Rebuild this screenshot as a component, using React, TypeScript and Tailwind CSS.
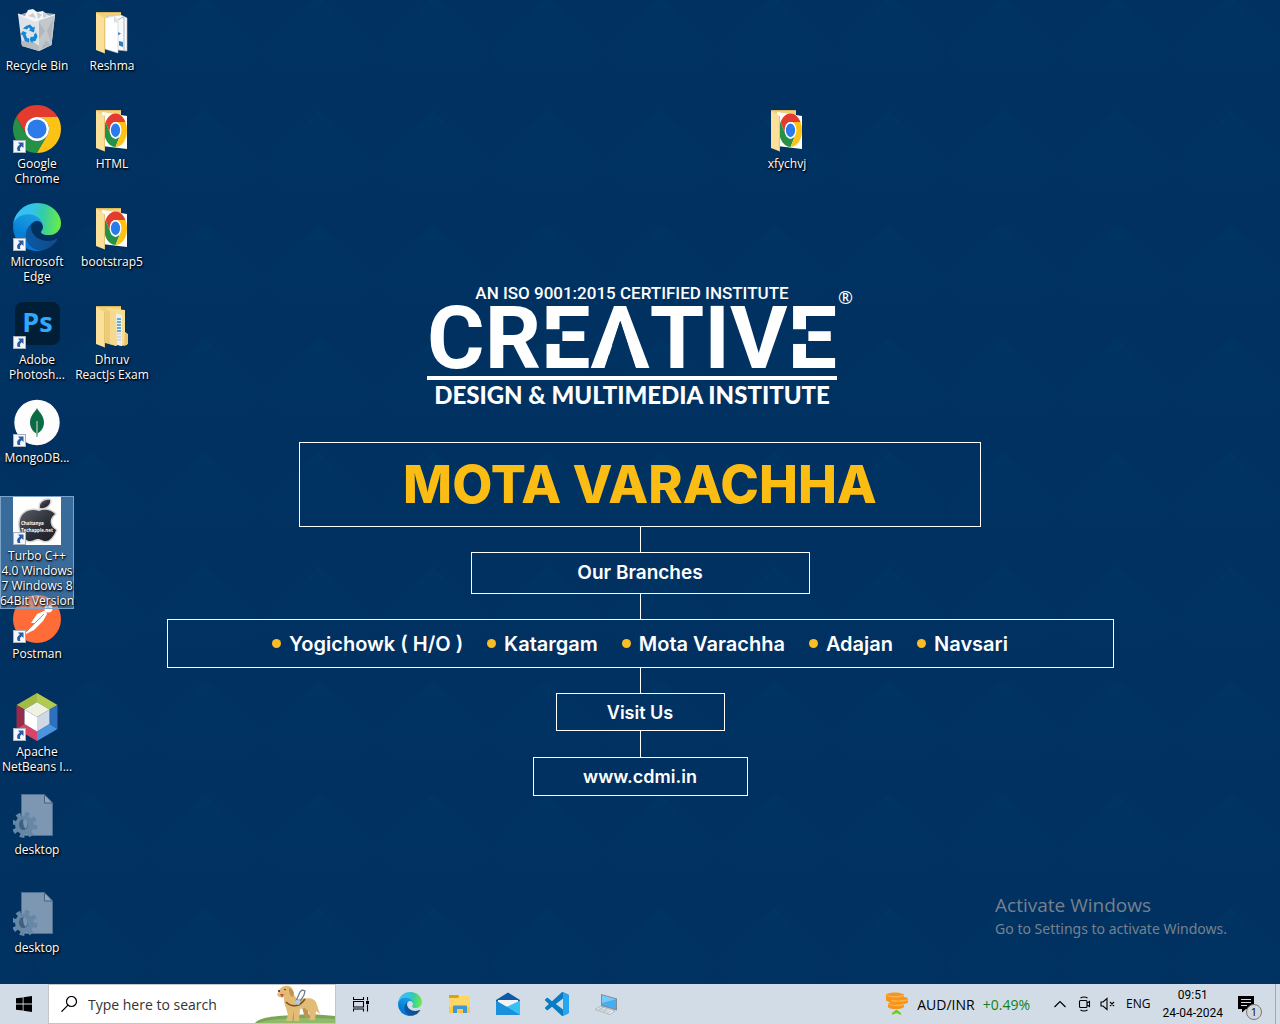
import React from "react";

type IconProps = { className?: string };

function ShortcutBadge() {
  return (
    <svg viewBox="0 0 13 13" className="absolute bottom-0 left-0 size-[13px]" aria-hidden="true">
      <rect x=".5" y=".5" width="12" height="12" fill="#f5f7fa" stroke="#a9b0b8" />
      <path d="M5 2.500h5.500V8L8.700 6.300C7 7.400 6.600 9 7.400 11L4.800 11C3.400 8.400 4 6.200 6.800 4.400z" fill="#2a5ca5" />
    </svg>
  );
}

function ChromeShape() {
  return (
    <>
      <path d="M24 12H44.780A24 24 0 0 0 3.220 12L13.610 30A12 12 0 0 1 24 12Z" fill="#e33b2e" />
      <path d="M13.610 30L3.220 12A24 24 0 0 0 24 48L34.390 30A12 12 0 0 1 13.610 30Z" fill="#259145" />
      <path d="M34.390 30L24 48A24 24 0 0 0 44.780 12H24A12 12 0 0 1 34.390 30Z" fill="#fcc314" />
      <circle cx="24" cy="24" r="12" fill="#fff" />
      <circle cx="24" cy="24" r="9.600" fill="#2c7bea" />
    </>
  );
}

function ChromeIcon({ className }: IconProps) {
  return (
    <svg viewBox="0 0 48 48" className={className} aria-hidden="true">
      <ChromeShape />
    </svg>
  );
}

function EdgeIcon({ className, id = "edge" }: IconProps & { id?: string }) {
  return (
    <svg viewBox="4.6 4.6 256 256" className={className} aria-hidden="true">
      <defs>
        <linearGradient id={`${id}-a`} x1="63" y1="178" x2="241" y2="178" gradientUnits="userSpaceOnUse">
          <stop offset="0" stopColor="#0c59a4" />
          <stop offset="1" stopColor="#114a8b" />
        </linearGradient>
        <linearGradient id={`${id}-b`} x1="140" y1="70" x2="46" y2="230" gradientUnits="userSpaceOnUse">
          <stop offset="0" stopColor="#1b9de2" />
          <stop offset=".3" stopColor="#1595df" />
          <stop offset=".7" stopColor="#0680d7" />
          <stop offset="1" stopColor="#0078d4" />
        </linearGradient>
        <linearGradient id={`${id}-c`} x1="30" y1="80" x2="250" y2="110" gradientUnits="userSpaceOnUse">
          <stop offset="0" stopColor="#35c1f1" />
          <stop offset=".3" stopColor="#34c1ed" />
          <stop offset=".6" stopColor="#36cba8" />
          <stop offset="1" stopColor="#66eb4b" />
        </linearGradient>
      </defs>
      <path fill={`url(#${id}-a)`} d="M235.68 195.46a93.73 93.73 0 0 1-10.54 4.71 101.87 101.87 0 0 1-35.9 6.46c-47.32 0-88.54-32.55-88.54-74.32A31.48 31.48 0 0 1 117.13 105c-42.8 1.8-53.8 46.4-53.8 72.53 0 73.88 68.09 81.37 82.76 81.37 7.91 0 19.84-2.3 27-4.56l1.31-.44a128.34 128.34 0 0 0 66.6-52.8 4 4 0 0 0-5.32-5.64z" />
      <path fill={`url(#${id}-b)`} d="M110.34 246.34A79.2 79.2 0 0 1 87.6 225a80.72 80.72 0 0 1 29.53-120c3.12-1.47 8.45-4.13 15.54-4a32.35 32.35 0 0 1 25.69 13 31.88 31.88 0 0 1 6.36 18.66c0-.21 24.46-79.6-80-79.6-43.9 0-80 41.66-80 78.21a130.15 130.15 0 0 0 12.11 56 128 128 0 0 0 156.38 67.11 75.55 75.55 0 0 1-62.78-8z" />
      <path fill={`url(#${id}-c)`} d="M156.94 153.78c-.81 1.05-3.3 2.5-3.3 5.66 0 2.61 1.7 5.12 4.72 7.23 14.38 10 41.49 8.68 41.56 8.68a59.56 59.56 0 0 0 30.27-8.35 61.38 61.38 0 0 0 30.43-52.88c.26-22.41-8-37.31-11.34-43.91C228.09 28.76 182.35 4.71 132.6 4.71a128 128 0 0 0-128 126.2c.48-36.54 36.8-66.05 80-66.05 3.5 0 23.46.34 42 10.07 16.34 8.58 24.9 18.94 30.85 29.21 6.18 10.67 7.28 24.15 7.28 29.52s-2.74 13.33-7.8 20.12z" />
    </svg>
  );
}

function RecycleBinIcon({ className }: IconProps) {
  return (
    <svg viewBox="0 0 48 48" className={className} aria-hidden="true">
      <path d="M6 8L18 4l24 3-20 7z" fill="#9fa9b3" />
      <path d="M12 9l3-6 5-1 4 3 6-1 4 4 3 1-4 4-12 2-9-3z" fill="#f4f6f8" />
      <path d="M15 9l5-3 3 5zM24 5l5 3-4 4zM30 5l5 5-5 2z" fill="#c9ced3" />
      <path d="M5 7l17 7 20-6.500-3.500 30.500L26 44l-17-5z" fill="#dfe3e7" />
      <path d="M26 13l16-5.500-3.500 30.500L26 44z" fill="#c3c8cd" />
      <path d="M26 15l6 9-6 8zM40 12l-6 12 4 12zM28 42l5-9 5 5z" fill="#adb3b9" opacity=".8" />
      <path d="M8 35l6-3 8 4 4 3v5L9 39z" fill="#b6bbc0" />
      <path d="M5 7l17 7 20-6.500" fill="none" stroke="#f5f7f9" strokeWidth="1.200" />
      <g fill="#1286d8">
        <path d="M13 19l4-1.500 3 3 2-1-1 6-5-2 1.500-1.500-2-1.500-1.500 2-4-1z" />
        <path d="M10 24l4 2-1.500 1 1.500 4 2 .5v4l-4-1.500-2.500-6-2-.5z" />
        <path d="M18 30l3-.5v-2l2-2 1.500 4-2 4.500-3 .5v2l-3-4 2-4z" />
      </g>
    </svg>
  );
}

function FolderIcon({ className, kind }: IconProps & { kind: "docs" | "chrome" | "nested" }) {
  return (
    <svg viewBox="0 0 48 48" className={className} aria-hidden="true">
      <path d="M8 5h25v35H8z" fill="#f1d27c" />
      <path d="M8 5h25v1H8z" fill="#d9b65c" />
      {kind === "docs" && (
        <>
          <path d="M20 9l13-1 6 3v33l-9-1z" fill="#f7f9fb" stroke="#b8bec6" strokeWidth=".6" />
          <path d="M30 13l5-3 1 2v31" fill="none" stroke="#7e8b9b" strokeWidth=".6" />
          <path d="M30 25l3 1.500-3 2zM31 34l4 1v5l-4-1.500z" fill="#2d7fbe" />
          <path d="M17 11l9-2 4 5v32l-13-4z" fill="#fff" stroke="#c5cad0" strokeWidth=".6" />
          <path d="M26 9v6l4 1z" fill="#d9dde2" />
        </>
      )}
      {kind === "chrome" && (
        <>
          <path d="M14 7l25 4v33l-25-3z" fill="#fff" />
          <g transform="translate(16 8.500) scale(.48 .7)">
            <ChromeShape />
          </g>
        </>
      )}
      {kind === "nested" && (
        <>
          <path d="M19 7l18 2v22l2 2v11l-6 1-14-4z" fill="#f7dd8f" />
          <path d="M27 12l7 2v31l-7-2z" fill="#e8eef3" />
          <path d="M29 18h4M29 21h4M29 24h4M29 27h4M29 30h4" stroke="#3b94c2" strokeWidth="1.500" />
          <path d="M29 33h4M29 36h4M29 39h4" stroke="#b9c6d1" />
          <path d="M17 9l5 1 6 3v32l-11-3z" fill="#eecb76" />
          <path d="M28 12l1 33-7-2V9z" fill="#f5d98c" />
          <path d="M37 31l3 2v10l-4 2" fill="#e9c66b" />
        </>
      )}
      <path d="M8 6l9 5v35.500L8 43z" fill="#fbe09a" />
      <path d="M16.500 11v35" stroke="#e2bf68" strokeWidth=".8" />
    </svg>
  );
}

function PhotoshopIcon({ className }: IconProps) {
  return (
    <svg viewBox="0 0 48 48" className={className} aria-hidden="true">
      <rect x="2" y="1" width="45" height="43" rx="8" fill="#001e36" />
      <text x="24.500" y="31" textAnchor="middle" fontFamily="Open Sans, sans-serif" fontWeight="700" fontSize="27" fill="#31a8ff">Ps</text>
    </svg>
  );
}

function MongoIcon({ className }: IconProps) {
  return (
    <svg viewBox="0 0 48 48" className={className} aria-hidden="true">
      <circle cx="24" cy="23.500" r="22.700" fill="#fdfdfd" />
      <path d="M24 9c1 3 7 7 7 14.500 0 6-4 9.500-6.300 11L24 38l-.8-3.500C21 33 17 29.500 17 23.500 17 16 23 12 24 9z" fill="#0b6b44" />
      <path d="M24 22v16" stroke="#93b9a5" strokeWidth="1.500" />
    </svg>
  );
}

function TurboIcon({ className }: IconProps) {
  return (
    <svg viewBox="0 0 48 48" className={className} aria-hidden="true">
      <defs>
        <linearGradient id="apple" x1="0" y1="0" x2="1" y2="1">
          <stop offset="0" stopColor="#5a5d66" />
          <stop offset=".6" stopColor="#2b2d35" />
          <stop offset="1" stopColor="#1e1f26" />
        </linearGradient>
      </defs>
      <path d="M0 0h48v48H0z" fill="#fff" />
      <g stroke="#d5d5d8" strokeWidth="3" strokeLinejoin="round" fill="#d5d5d8">
        <path d="M27 11c-1-5 4-9 10-8 1 5-5 9-10 8z" />
        <path d="M26 14c5-2 11-2 16 3-6 4-6 12 1 16-2 6-6 11-10 11-4 0-5-2-8-2s-5 2-8 2C11 44 5 34 7 23c2-8 10-12 19-9z" />
      </g>
      <g fill="url(#apple)">
        <path d="M27 11c-1-5 4-9 10-8 1 5-5 9-10 8z" />
        <path d="M26 14c5-2 11-2 16 3-6 4-6 12 1 16-2 6-6 11-10 11-4 0-5-2-8-2s-5 2-8 2C11 44 5 34 7 23c2-8 10-12 19-9z" />
      </g>
      <g fontFamily="Open Sans, sans-serif" fontWeight="700" fontSize="4.500" fill="#fff">
        <text x="8" y="28">Chaitanya</text>
        <text x="8" y="34.500">Techapple.net</text>
      </g>
    </svg>
  );
}

function PostmanIcon({ className }: IconProps) {
  return (
    <svg viewBox="0 0 48 48" className={className} aria-hidden="true">
      <circle cx="24" cy="24" r="24" fill="#ff6c37" />
      <circle cx="35.500" cy="13.500" r="4" fill="#fff" />
      <path d="M33 15l-9 4-6 9 4 0-7 7-3 3 1 1 8-4 9-9 4-7z" fill="#fff" />
      <path d="M13 37l17-17M22 28l9-9" stroke="#ff6c37" strokeWidth=".9" fill="none" />
      <path d="M34 12l4 2" stroke="#ff6c37" strokeWidth=".8" />
    </svg>
  );
}

function NetBeansIcon({ className }: IconProps) {
  return (
    <svg viewBox="0 0 48 48" className={className} aria-hidden="true">
      <path d="M24 0L3.500 12l8 4.500L24 9z" fill="#a4bb43" />
      <path d="M24 0l20.500 12-8 4.500L24 9z" fill="#b3cb4d" />
      <path d="M3.500 12v24l8-5V16.500z" fill="#962c49" />
      <path d="M44.500 12v24l-8-5V16.500z" fill="#2f6fc0" />
      <path d="M3.500 36L24 48v-9.500L11.500 31z" fill="#db4467" />
      <path d="M44.500 36L24 48v-9.500L36.500 31z" fill="#4a94e0" />
      <path d="M24 9l12.500 7.500L24 24l-12.500-7.500z" fill="#eef2df" />
      <path d="M11.500 16.500L24 24v14.500L11.500 31z" fill="#fff" />
      <path d="M36.500 16.500L24 24v14.500L36.500 31z" fill="#cfd9e3" />
    </svg>
  );
}

function ConfigFileIcon({ className }: IconProps) {
  return (
    <svg viewBox="0 0 48 48" className={className} aria-hidden="true">
      <path d="M8.500 3.500h23l8 8.500v32.500h-31z" fill="#7d97b3" stroke="#4f7090" />
      <path d="M31.500 3.500V12h8z" fill="#8fa7bf" stroke="#3f6285" />
      <circle cx="11.500" cy="34" r="9.500" fill="#6787a6" />
      <circle cx="11.500" cy="34" r="10.500" fill="none" stroke="#6787a6" strokeWidth="5" strokeDasharray="4.300 3.946" />
      <ellipse cx="10.500" cy="33.500" rx="4.500" ry="5.500" fill="#3f6080" />
      <path d="M10.500 28c4 0 6 5 2 10-2-3-3-6-2-10z" fill="#7d97b3" />
    </svg>
  );
}

type DesktopItem = { lines: string[]; icon: React.ReactNode; shortcut?: boolean; selected?: boolean; place?: string };

const full = "size-12";

const items: DesktopItem[] = [
  { lines: ["Recycle Bin"], icon: <RecycleBinIcon className={full} /> },
  { lines: ["Google", "Chrome"], icon: <ChromeIcon className={full} />, shortcut: true },
  { lines: ["Microsoft", "Edge"], icon: <EdgeIcon className={full} id="edge-desktop" />, shortcut: true },
  { lines: ["Adobe", "Photosh..."], icon: <PhotoshopIcon className={full} />, shortcut: true },
  { lines: ["MongoDB..."], icon: <MongoIcon className={full} />, shortcut: true },
  { lines: ["Turbo C++", "4.0 Windows", "7 Windows 8", "64Bit Version"], icon: <TurboIcon className={full} />, shortcut: true, selected: true },
  { lines: ["Postman"], icon: <PostmanIcon className={full} />, shortcut: true },
  { lines: ["Apache", "NetBeans I..."], icon: <NetBeansIcon className={full} />, shortcut: true },
  { lines: ["desktop"], icon: <ConfigFileIcon className={full} /> },
  { lines: ["desktop"], icon: <ConfigFileIcon className={full} /> },
  { lines: ["Reshma"], icon: <FolderIcon className={full} kind="docs" /> },
  { lines: ["HTML"], icon: <FolderIcon className={full} kind="chrome" /> },
  { lines: ["bootstrap5"], icon: <FolderIcon className={full} kind="chrome" /> },
  { lines: ["Dhruv", "ReactJs Exam"], icon: <FolderIcon className={full} kind="nested" /> },
  { lines: ["xfychvj"], icon: <FolderIcon className={full} kind="chrome" />, place: "col-start-11 row-start-2" },
];

function DesktopIcon({ item }: { item: DesktopItem }) {
  return (
    <button
      type="button"
      className={`mr-px flex flex-col items-center self-start border ${item.place ?? ""} ${
        item.selected ? "z-10 border-[#7ba3c9] bg-[#8fc4f0]/40" : "border-transparent"
      }`}
    >
      <span className="relative size-12">
        {item.icon}
        {item.shortcut && <ShortcutBadge />}
      </span>
      <span className="mt-[3px] block text-center text-xs leading-[15px] whitespace-nowrap text-white [text-shadow:1px_1px_2px_#000,0_1px_2px_#000]">
        {item.lines.map((line) => (
          <span key={line} className="block">{line}</span>
        ))}
      </span>
    </button>
  );
}

function WallpaperPattern() {
  return (
    <svg className="absolute inset-0 size-full" aria-hidden="true">
      <defs>
        <linearGradient id="facet" x1="0" y1="0" x2="0" y2="1">
          <stop offset="0" stopColor="#003866" />
          <stop offset="1" stopColor="#003062" stopOpacity="0" />
        </linearGradient>
        <pattern id="diamonds" width="114" height="114" x="34" y="-4" patternUnits="userSpaceOnUse">
          <path d="M57 0l57 57-57 57L0 57z" fill="url(#facet)" />
        </pattern>
      </defs>
      <rect width="100%" height="100%" fill="url(#diamonds)" opacity=".5" />
    </svg>
  );
}

/* Stencil cuts laid over single letters of the wordmark, in font units. */
function CutE() {
  return (
    <span className="relative">
      E
      <svg viewBox="0 0 1146 1456" preserveAspectRatio="none" className="absolute top-[19px] left-0 h-[63px] w-[49px]" aria-hidden="true">
        <path d="M60 560h440v340H60z" fill="#003262" />
      </svg>
    </span>
  );
}

function CutA() {
  return (
    <span className="relative">
      A
      <svg viewBox="0 0 1382 1456" preserveAspectRatio="none" className="absolute top-[19px] left-0 h-[63px] w-[59px]" aria-hidden="true">
        <path d="M322 1456L688 365l362 1091z" fill="#003262" />
      </svg>
    </span>
  );
}

const branches = ["Yogichowk ( H/O )", "Katargam", "Mota Varachha", "Adajan", "Navsari"];

function Connector({ className }: IconProps) {
  return <div className={`w-px bg-white ${className}`} />;
}

function Wallpaper() {
  return (
    <div className="absolute inset-0 flex flex-col items-center overflow-hidden bg-[#003161] font-['Inter',sans-serif] text-white">
      <WallpaperPattern />
      <div className="relative flex flex-col items-center pt-[284px]">
        <div className="flex gap-px">
          <div className="flex flex-col items-center">
            <p className="font-['Roboto',sans-serif] text-[17px] leading-[18px] font-medium">AN ISO 9001:2015 CERTIFIED INSTITUTE</p>
            <h1 className="font-['Roboto',sans-serif] text-[88px] leading-[72px] font-bold">
              CR<CutE /><CutA />TIV<CutE />
            </h1>
            <div className="mt-[2px] h-[4px] w-full bg-white" />
            <p className="mt-[2px] font-['Lato',sans-serif] text-[24px] leading-[25px] font-black">DESIGN &amp; MULTIMEDIA INSTITUTE</p>
          </div>
          <span className="font-['Noto_Sans',sans-serif] text-[18px] leading-[26px]">®</span>
        </div>
        <div className="mt-[35px] flex h-[85px] w-[682px] items-center justify-center border border-white">
          <h2 className="text-[52px] leading-[56px] font-extrabold text-[#fbbc14]">MOTA VARACHHA</h2>
        </div>
        <Connector className="h-[25px]" />
        <div className="flex h-[42px] w-[339px] items-center justify-center border border-white text-[19px] font-semibold">Our Branches</div>
        <Connector className="h-[25px]" />
        <ul className="flex h-[49px] w-[947px] items-center justify-center gap-6 border border-white text-[20px] font-semibold">
          {branches.map((name) => (
            <li key={name} className="flex items-center gap-2">
              <span className="size-[9px] rounded-full bg-[#fbbc24]" />
              {name}
            </li>
          ))}
        </ul>
        <Connector className="h-[25px]" />
        <div className="flex h-[38px] w-[169px] items-center justify-center border border-white text-[18px] font-semibold">Visit Us</div>
        <Connector className="h-[26px]" />
        <a href="https://www.cdmi.in" className="flex h-[39px] w-[215px] items-center justify-center border border-white text-[18px] font-semibold">www.cdmi.in</a>
      </div>
    </div>
  );
}

function StartIcon() {
  return (
    <svg viewBox="0 0 16 16" className="size-4" aria-hidden="true">
      <path d="M0 2.300L6.700 1.400v6.200H0zM7.500 1.300L16 0v7.600H7.500zM0 8.400h6.700v6.200L0 13.700zM7.500 8.400H16V16l-8.500-1.200z" fill="#000" />
    </svg>
  );
}

function GuideDog() {
  return (
    <svg viewBox="0 0 80 38" className="h-[38px] w-20 shrink-0" aria-hidden="true">
      <path d="M0 38c5-6 20-7 40-8 18-1 30 0 40 1v7z" fill="#7ba557" />
      <path d="M4 38c12-5 40-6 76-4v4z" fill="#93b96b" />
      <path d="M47 22l6 2 1 9h-4l-2-7zM35 23l5 2-1 8h-4z" fill="#bd9350" />
      <path d="M24 6C25 2 30 0 34 1c3 1 5 5 5 9l3 4c6 0 13-2 17 1 3 2 3 6 5 11l1 3-4-3-1 9h-6l1-2-1-6-4-4-5 1-1 11 1 1h-6v-10l-2 10h-6l2-6-2-7c-2-4-2-8-2-11l-5 0-2-2z" fill="#e2bb74" />
      <path d="M34 3c4 1 6 5 4 9-3-1-4-4-4-9z" fill="#c2924c" />
      <path d="M31 17c5 5 13 6 19-3" fill="none" stroke="#7a4f2a" strokeWidth="1.600" />
      <path d="M41 16l4-9 2-2 3 1-1 4-5 8" fill="none" stroke="#66758c" strokeWidth="1.200" />
      <path d="M41 15l5 1-2 4-4-1z" fill="#a9cdea" />
      <path d="M25 9h4l-2 4z" fill="#d14b52" />
      <circle cx="30" cy="4.500" r=".8" fill="#3a2a1c" />
      <circle cx="24" cy="6" r="1" fill="#3a2a1c" />
    </svg>
  );
}

function TaskViewIcon() {
  return (
    <svg viewBox="0 0 16 16" className="size-4" fill="none" stroke="#000" strokeWidth="1.100" aria-hidden="true">
      <path d="M.5 1v2.500h10V1M.5 15.500v-2.500h10v2.500M.5 5.500h10v5.500H.5zM14.500 1v3.500M14.500 8.500v7" />
      <path d="M13 5h3v3h-3z" fill="#000" stroke="none" />
    </svg>
  );
}

function ExplorerIcon() {
  return (
    <svg viewBox="0 0 24 24" className="size-6" aria-hidden="true">
      <path d="M2 3h9l1.500 2H23v7H2z" fill="#e0a014" />
      <path d="M2 6h9l1.500-2H22q1 0 1 1v16H2z" fill="#ffd766" />
      <path d="M2 15h21v6H2z" fill="#fdc93f" />
      <path d="M6 21v-6.500q0-1 1-1h12q1 0 1 1V21h-4v-4h-6v4z" fill="#3f97d7" />
    </svg>
  );
}

function MailIcon() {
  return (
    <svg viewBox="0 0 24 24" className="size-6" aria-hidden="true">
      <path d="M0 8L12 .5 24 8v4H0z" fill="#1059a8" />
      <path d="M2 8h20v8H2z" fill="#f3f3f3" />
      <path d="M24 8.500V23H8V16z" fill="#36c0f4" />
      <path d="M0 8.500L12 15.500 24 23H0z" fill="#1b8fdc" />
    </svg>
  );
}

function CodeIcon() {
  return (
    <svg viewBox="0 0 24 24" className="size-6" aria-hidden="true">
      <path fill="#0a7cc4" d="M23.150 2.587L18.210.21a1.494 1.494 0 0 0-1.705.29l-9.460 8.630-4.120-3.128a.999.999 0 0 0-1.276.057L.327 7.261A1 1 0 0 0 .326 8.740L3.899 12 .326 15.260a1 1 0 0 0 .001 1.479L1.650 17.940a.999.999 0 0 0 1.276.057l4.120-3.128 9.460 8.630a1.492 1.492 0 0 0 1.704.29l4.942-2.377A1.500 1.500 0 0 0 24 20.060V3.939a1.500 1.500 0 0 0-.850-1.352zm-5.146 14.861L10.826 12l7.178-5.448v10.896z" />
      <path fill="#27a5ee" d="M18 .2l5.150 2.387q.85.400.85 1.352V20.060q0 .95-.850 1.352L18 23.800z" />
    </svg>
  );
}

function LaptopIcon() {
  return (
    <svg viewBox="0 0 24 24" className="size-6" aria-hidden="true">
      <path d="M7 2l16 4.500v12L7 14z" fill="#7f8a93" />
      <path d="M8 3.300l14 4v9.800L8 13z" fill="#46aef0" />
      <path d="M8 3.300l14 4L8 11z" fill="#79c8f7" />
      <path d="M6 14.500l15 4.500-5 3.500L1 17.500z" fill="#eceff1" stroke="#909ba4" strokeWidth=".6" />
      <path d="M5 16l12 4M3.500 17l12 4M9 15.500l-4 3M13 17l-4 3" stroke="#a6afb6" strokeWidth=".6" />
    </svg>
  );
}

function CoinsIcon() {
  return (
    <svg viewBox="0 0 24 24" className="size-6" aria-hidden="true">
      <path d="M1 3q0-2 9-2.500 9 .5 9 2.500v2q4 .5 4 2v3q0 1.500-4 2v3q-2 2-8 2-7 0-8-2v-3l2-1.500-4-2z" fill="#f7941d" />
      <path d="M2 3.500q8 2.500 17 0M6 8.500q9 1.500 17-.500M4 12.500q7 2 15 0" stroke="#ffb347" strokeWidth="1.300" fill="none" />
      <path d="M7 23v-2l4.500-3.500L16 21v2l-4.500-2z" fill="#6ccb1b" />
    </svg>
  );
}

function ChevronIcon() {
  return (
    <svg viewBox="0 0 12 8" className="h-2 w-3" aria-hidden="true">
      <path d="M.5 7L6 1.500 11.500 7" fill="none" stroke="#000" strokeWidth="1.200" />
    </svg>
  );
}

function MeetNowIcon() {
  return (
    <svg viewBox="0 0 14 16" className="h-4 w-[14px]" fill="none" stroke="#000" strokeWidth="1.100" aria-hidden="true">
      <rect x="1.500" y="4.500" width="7.500" height="7" rx="1" />
      <path d="M9 7l2.500-1.500v5L9 9M2.500 2Q6 0 9.500 2M2.500 14Q6 16 9.500 14" />
    </svg>
  );
}

function MutedIcon() {
  return (
    <svg viewBox="0 0 16 14" className="h-[14px] w-4" fill="none" stroke="#000" strokeWidth="1.100" aria-hidden="true">
      <path d="M1 5h2l4-3.500v11L3 9H1zM10 5l4 4M14 5l-4 4" />
    </svg>
  );
}

function NotificationIcon() {
  return (
    <span className="relative">
      <svg viewBox="0 0 17 17" className="size-[17px]" aria-hidden="true">
        <path d="M0 0h16v13H8l-4 3.500V13H0z" fill="#000" />
        <path d="M3 3.500h10M3 6.500h10M3 9.500h6" stroke="#d5dee8" />
      </svg>
      <span className="absolute top-2 left-2 flex size-4 items-center justify-center rounded-full border border-[#777] bg-[#d3d6da] text-[11px] leading-none text-black">1</span>
    </span>
  );
}

function TaskbarButton({ label, children }: { label: string; children: React.ReactNode }) {
  return (
    <button type="button" aria-label={label} className="flex w-[49px] items-center justify-center">
      {children}
    </button>
  );
}

function Taskbar() {
  return (
    <footer className="flex h-10 shrink-0 items-stretch bg-[#d2dce7] text-black">
      <button type="button" aria-label="Start" className="flex w-12 items-center justify-center">
        <StartIcon />
      </button>
      <label className="flex w-72 items-center overflow-hidden border border-[#c3c5c8] bg-white pl-3">
        <svg viewBox="0 0 16 16" className="size-4 shrink-0" fill="none" stroke="#000" strokeWidth="1.200" aria-hidden="true">
          <circle cx="10.500" cy="5.500" r="5" />
          <path d="M7 9.200L.5 15.700" />
        </svg>
        <input type="search" aria-label="Search" placeholder="Type here to search" className="ml-[11px] min-w-0 flex-1 bg-transparent text-[14px] outline-none placeholder:text-[#333]" />
        <GuideDog />
      </label>
      <TaskbarButton label="Task View"><TaskViewIcon /></TaskbarButton>
      <TaskbarButton label="Microsoft Edge"><EdgeIcon className="size-6" id="edge-taskbar" /></TaskbarButton>
      <TaskbarButton label="File Explorer"><ExplorerIcon /></TaskbarButton>
      <TaskbarButton label="Mail"><MailIcon /></TaskbarButton>
      <TaskbarButton label="Visual Studio Code"><CodeIcon /></TaskbarButton>
      <TaskbarButton label="This PC"><LaptopIcon /></TaskbarButton>
      <div className="ml-auto flex items-stretch">
        <button type="button" className="flex items-center gap-2 pr-6 text-[14px]">
          <CoinsIcon />
          <span>AUD/INR</span>
          <span className="text-[#138013]">+0.49%</span>
        </button>
        <button type="button" aria-label="Show hidden icons" className="flex w-3 items-center"><ChevronIcon /></button>
        <button type="button" aria-label="Meet Now" className="ml-3 flex w-[14px] items-center"><MeetNowIcon /></button>
        <button type="button" aria-label="Speakers muted" className="ml-2 flex w-4 items-center"><MutedIcon /></button>
        <button type="button" className="ml-2.5 flex items-center text-[12px]">ENG</button>
        <button type="button" className="ml-3 flex flex-col items-center justify-center font-['Roboto',sans-serif] text-[12px] leading-[18px]">
          <span>09:51</span>
          <span>24-04-2024</span>
        </button>
        <button type="button" aria-label="Notifications" className="ml-[15px] flex w-[37px] items-center"><NotificationIcon /></button>
        <button type="button" aria-label="Show desktop" className="w-[5px] border-l border-[#a0a8b0]" />
      </div>
    </footer>
  );
}

export default function App() {
  return (
    <div className="flex min-h-screen flex-col font-['Open_Sans','Noto_Sans',sans-serif]">
      <main className="relative flex-1 overflow-hidden">
        <Wallpaper />
        <div className="relative grid auto-cols-[75px] grid-flow-col grid-rows-[repeat(10,96px)] gap-y-0.5 pt-[6px]">
          {items.map((item, i) => (
            <DesktopIcon key={i} item={item} />
          ))}
        </div>
        <div className="absolute right-[53px] bottom-[46px] text-[#76818d]">
          <p className="text-[19px] leading-[28px]">Activate Windows</p>
          <p className="font-['Noto_Sans',sans-serif] text-[14px] leading-[19px]">Go to Settings to activate Windows.</p>
        </div>
      </main>
      <Taskbar />
    </div>
  );
}
